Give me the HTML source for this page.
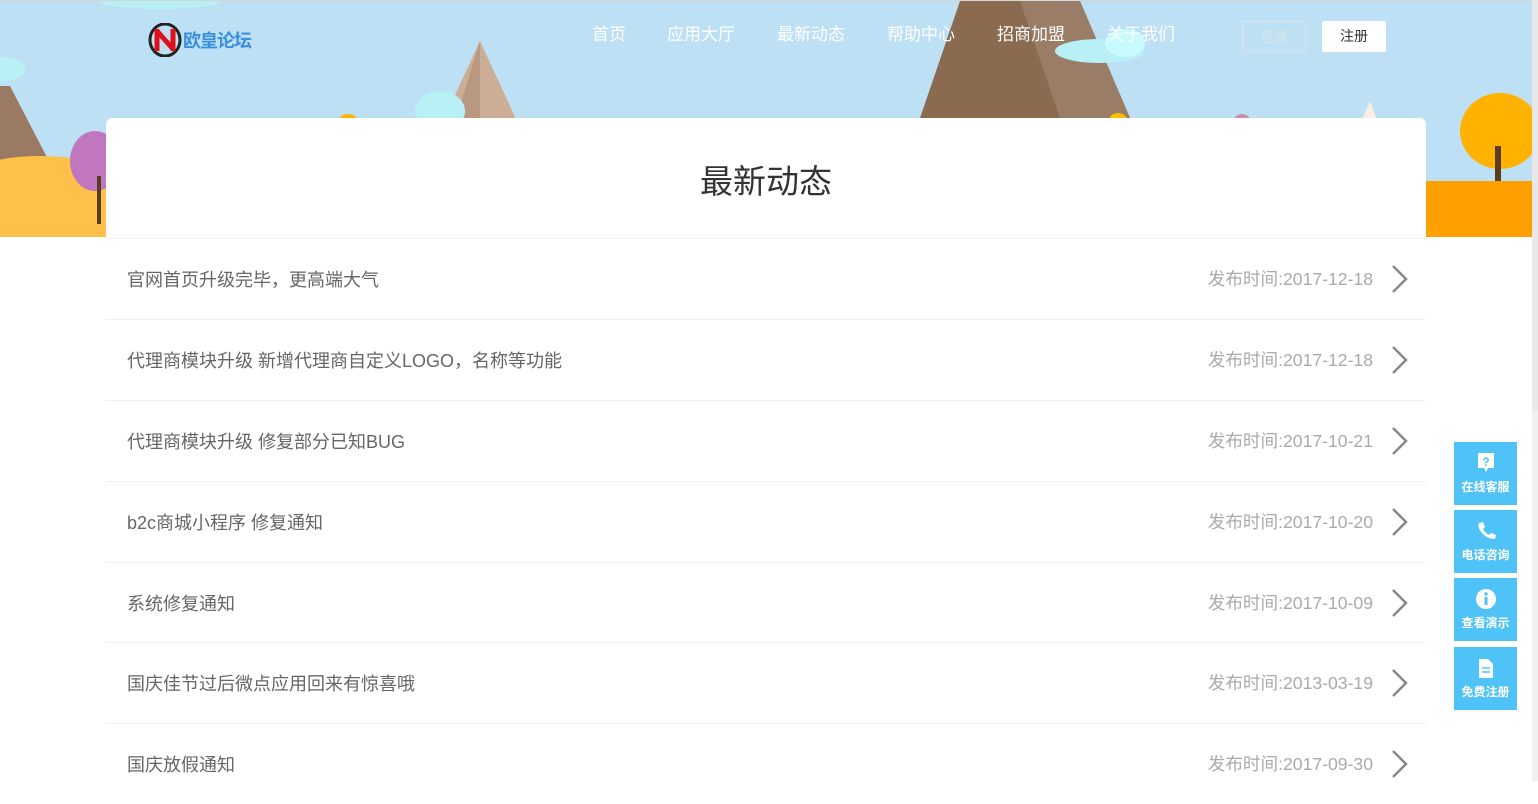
<!DOCTYPE html>
<html><head><meta charset="utf-8"><style>
*{margin:0;padding:0;box-sizing:border-box}
body{width:1538px;height:781px;overflow:hidden;background:#fff;font-family:"Liberation Sans","Noto Sans CJK SC",sans-serif;position:relative}
.banner{position:absolute;left:0;top:0;width:1532px;height:237px;background:#bde0f5;overflow:hidden;border-top:1px solid #d5d5d5}
.sb{position:absolute;right:0;top:0;width:6px;height:781px;background:#f0f0f0}
.sb div{position:absolute;left:0;top:0;width:6px;height:410px;background:#e8e8e8}
.nav{position:absolute;top:19px;font-size:17px;color:#fff}
.logo{position:absolute;left:148px;top:22px;display:flex;align-items:center}
.logo span{font-weight:bold;color:#3a8fde;font-size:18px;margin-left:1px;letter-spacing:-1px}
.btn{position:absolute;top:20px;width:64px;height:31px;border-radius:2px;font-size:14px;text-align:center;line-height:30px}
.card{position:absolute;left:106px;top:118px;width:1320px;height:120px;background:#fff;border-radius:6px 6px 0 0;text-align:center}
.card h1{font-weight:normal;font-size:33px;color:#333;padding-top:37px}
.row{position:absolute;left:106px;width:1320px;height:81px;border-top:1px solid #f0f0f0}
.row .t{position:absolute;left:21px;top:27px;font-size:18px;color:#666}
.row .d{position:absolute;right:53px;top:27px;font-size:17.6px;color:#aaa}
.row svg{position:absolute;right:18px;top:25px}
.side{position:absolute;left:1454px;width:63px;height:63px;background:#4fc3f7;color:#fff;font-size:12px;font-weight:bold;text-align:center}
.side svg{display:block;margin:10px auto 4px}
</style></head><body>
<div class="banner">
<svg width="1532" height="237" style="position:absolute;left:0;top:0">
<ellipse cx="160" cy="0" rx="60" ry="8" fill="#b9f0f5"/>
<ellipse cx="5" cy="68" rx="20" ry="12" fill="#b9f0f5"/>
<polygon points="0,85 10,85 80,220 0,220" fill="#9a7a63"/>
<polygon points="480,40 420,170 540,170" fill="#cbae95"/>
<polygon points="480,40 440,170 480,170" fill="#b8997f"/>
<ellipse cx="440" cy="110" rx="25" ry="20" fill="#b9f0f5"/>
<polygon points="960,0 1080,0 1130,117 920,117" fill="#8a6b50"/>
<polygon points="1020,0 1080,0 1130,117 1060,117" fill="#9a7d66"/>
<ellipse cx="1100" cy="50" rx="45" ry="12" fill="#b9f0f5"/>
<ellipse cx="1125" cy="42" rx="20" ry="14" fill="#c8fbfd"/>
<polygon points="1370,100 1420,240 1310,240" fill="#fdeee4"/>
<ellipse cx="1500" cy="130" rx="40" ry="38" fill="#ffb300"/>
<rect x="1495" y="145" width="6" height="50" fill="#5b3b22"/>
<rect x="1420" y="180" width="112" height="57" fill="#ffa000"/>
<ellipse cx="1480" cy="190" rx="70" ry="10" fill="#ffa000"/>
<rect x="0" y="170" width="110" height="67" fill="#ffc04a"/>
<ellipse cx="40" cy="175" rx="70" ry="20" fill="#ffc04a"/>
<ellipse cx="95" cy="160" rx="25" ry="30" fill="#c077c0"/>
<rect x="97" y="175" width="4" height="48" fill="#5b3b22"/>
<circle cx="348" cy="125" r="12" fill="#ffb300"/>
<circle cx="1118" cy="122" r="10" fill="#ffc000"/>
<circle cx="1242" cy="122" r="9" fill="#c98fb0"/>
</svg>
<div class="logo"><svg width="34" height="34" viewBox="0 0 34 34"><ellipse cx="17" cy="17" rx="15" ry="16" fill="none" stroke="#222" stroke-width="3"/><path d="M9 6v22M25 6v22M9 8l16 18" stroke="#e0101a" stroke-width="5" fill="none"/></svg><span>欧皇论坛</span></div>
<div class="nav" style="left:592px">首页</div>
<div class="nav" style="left:667px">应用大厅</div>
<div class="nav" style="left:777px">最新动态</div>
<div class="nav" style="left:887px">帮助中心</div>
<div class="nav" style="left:997px">招商加盟</div>
<div class="nav" style="left:1107px">关于我们</div>
<div class="btn" style="left:1242px;border:1px solid #d8e4ea;color:#d8e4ea">登录</div>
<div class="btn" style="left:1322px;background:#fff;color:#333">注册</div>
</div>
<div class="sb"><div></div></div>
<div class="card"><h1>最新动态</h1></div>
<div class="row" style="top:238px"><div class="t">官网首页升级完毕，更高端大气</div><div class="d">发布时间:2017-12-18</div><svg width="18" height="30"><path d="M3 2l13 13-13 13" stroke="#888" stroke-width="2.5" fill="none"/></svg></div>
<div class="row" style="top:319px"><div class="t">代理商模块升级 新增代理商自定义LOGO，名称等功能</div><div class="d">发布时间:2017-12-18</div><svg width="18" height="30"><path d="M3 2l13 13-13 13" stroke="#888" stroke-width="2.5" fill="none"/></svg></div>
<div class="row" style="top:400px"><div class="t">代理商模块升级 修复部分已知BUG</div><div class="d">发布时间:2017-10-21</div><svg width="18" height="30"><path d="M3 2l13 13-13 13" stroke="#888" stroke-width="2.5" fill="none"/></svg></div>
<div class="row" style="top:481px"><div class="t">b2c商城小程序 修复通知</div><div class="d">发布时间:2017-10-20</div><svg width="18" height="30"><path d="M3 2l13 13-13 13" stroke="#888" stroke-width="2.5" fill="none"/></svg></div>
<div class="row" style="top:562px"><div class="t">系统修复通知</div><div class="d">发布时间:2017-10-09</div><svg width="18" height="30"><path d="M3 2l13 13-13 13" stroke="#888" stroke-width="2.5" fill="none"/></svg></div>
<div class="row" style="top:642px"><div class="t">国庆佳节过后微点应用回来有惊喜哦</div><div class="d">发布时间:2013-03-19</div><svg width="18" height="30"><path d="M3 2l13 13-13 13" stroke="#888" stroke-width="2.5" fill="none"/></svg></div>
<div class="row" style="top:723px"><div class="t">国庆放假通知</div><div class="d">发布时间:2017-09-30</div><svg width="18" height="30"><path d="M3 2l13 13-13 13" stroke="#888" stroke-width="2.5" fill="none"/></svg></div>
<div class="side" style="top:442px"><svg width="20" height="22" viewBox="0 0 20 22"><path d="M2 1h16v15h-6l-2 4-2-4H2z" fill="#fff"/><text x="10" y="14" font-size="12" font-weight="bold" text-anchor="middle" fill="#4fc3f7" font-family="Liberation Sans">?</text></svg>在线客服</div>
<div class="side" style="top:510px"><svg width="20" height="22" viewBox="0 0 20 22"><path d="M3 3l4-1 2 5-2 2q2 4 6 6l2-2 5 2-1 4q-8 0-13-6T3 3z" fill="#fff"/></svg>电话咨询</div>
<div class="side" style="top:578px"><svg width="22" height="22" viewBox="0 0 22 22"><circle cx="11" cy="11" r="10" fill="#fff"/><rect x="9.5" y="9" width="3" height="8" fill="#4fc3f7"/><circle cx="11" cy="6" r="1.7" fill="#4fc3f7"/></svg>查看演示</div>
<div class="side" style="top:647px"><svg width="16" height="22" viewBox="0 0 16 22"><path d="M1 2h9l5 5v14H1z" fill="#fff"/><path d="M4 11h8M4 15h8" stroke="#4fc3f7" stroke-width="1.6"/></svg>免费注册</div>
</body></html>
